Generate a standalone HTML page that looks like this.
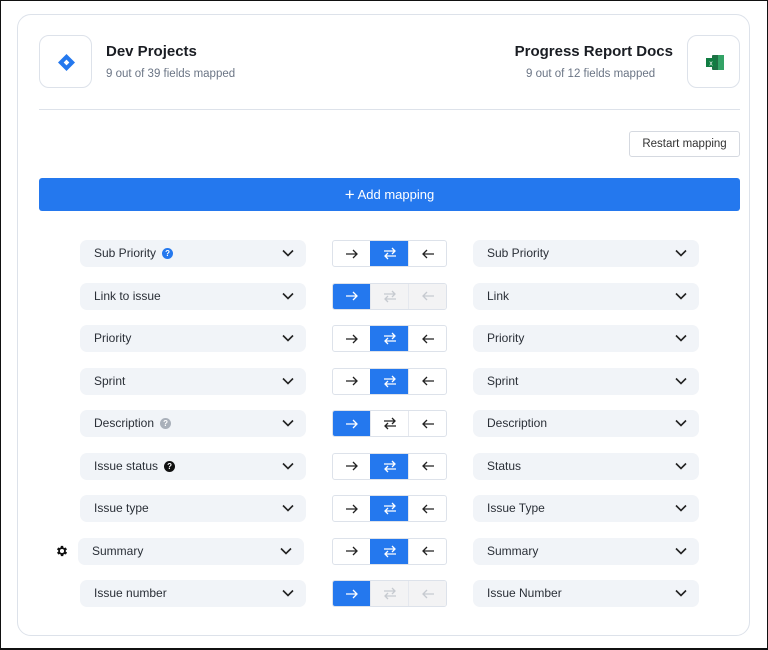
<!DOCTYPE html>
<html><head><meta charset="utf-8"><style>
*{box-sizing:border-box;margin:0;padding:0}
body{width:768px;height:650px;background:#fff;font-family:"Liberation Sans",sans-serif;position:relative;overflow:hidden}
.frame{position:absolute;left:0;top:0;width:768px;height:650px;border:1px solid #111;border-width:1px 1px 2px 1px;pointer-events:none}
.card{position:absolute;left:17px;top:14px;width:733px;height:622px;border:1px solid #dde2ea;border-radius:14px}
.ib{position:absolute;width:53px;height:53px;border:1px solid #dde2ea;border-radius:10px;background:#fff}
.t{position:absolute;font-size:15px;font-weight:bold;color:#1a1d23}
.s{position:absolute;font-size:11.5px;color:#6b7585}
.div{position:absolute;left:39px;top:109px;width:701px;height:1px;background:#dde2ea}
.rb{position:absolute;left:629px;top:131px;width:111px;height:26px;border:1px solid #d5d9e0;border-radius:3px;font-size:11.5px;color:#333;text-align:center;line-height:24px}
.add{position:absolute;left:39px;top:178px;width:701px;height:33px;background:#2478ee;border-radius:3px;color:#fff;font-size:13px;text-align:center;line-height:33px}
.sel{position:absolute;width:226px;height:27px;background:#f1f4f8;border-radius:7px;font-size:12px;color:#2a2f37;line-height:27px;padding-left:14px}
.sel svg.ch{position:absolute;right:12px;top:9px}
.tg{position:absolute;left:332px;width:115px;height:27px;border:1px solid #dde2ea;border-radius:3px;display:flex;overflow:hidden;background:#fff}
.tg div{flex:1;display:flex;align-items:center;justify-content:center;border-left:1px solid #e5e8ee}
.tg div:first-child{border-left:none}
.tg .on{background:#2478ee;border-color:#2478ee}
.tg .off{background:#f3f3f4}
.q{display:inline-block;width:11px;height:11px;border-radius:50%;color:#fff;font-size:8px;font-weight:bold;line-height:11px;text-align:center;vertical-align:1px;margin-left:6px}
</style></head><body>
<div class="card"></div>
<div class="ib" style="left:39px;top:35px"><svg width="53" height="53" viewBox="0 0 53 53"><path d="M26.5 18 L35 26.5 L26.5 35 L18 26.5Z" fill="#2478ee"/><rect x="24.5" y="24.5" width="4" height="4" fill="#fff" transform="rotate(45 26.5 26.5)"/></svg></div>
<div class="t" style="left:106px;top:43px">Dev Projects</div>
<div class="s" style="left:106px;top:68px">9 out of 39 fields mapped</div>
<div class="t" style="right:95px;top:43px">Progress Report Docs</div>
<div class="s" style="left:526px;top:68px">9 out of 12 fields mapped</div>
<div class="ib" style="left:687px;top:35px"><svg width="53" height="53" viewBox="0 0 53 53"><rect x="24" y="19" width="12" height="15" rx="1" fill="#1e7145"/><rect x="30" y="19" width="6" height="15" fill="#33a366"/><rect x="18" y="22" width="10" height="9" fill="#107c41"/><text x="23" y="29.5" font-size="7" fill="#fff" text-anchor="middle" font-family="Liberation Sans">x</text></svg></div>
<div class="div"></div>
<div class="rb">Restart mapping</div>
<div class="add"><span style="font-size:17px;vertical-align:-1px">+</span> Add mapping</div>
<div id="rows"></div>
<svg style="position:absolute;left:55px;top:544px" width="14" height="14" viewBox="0 0 24 24"><path fill="#111" d="M19.4 13a7.5 7.5 0 0 0 0-2l2.1-1.6-2-3.5-2.5 1a7.6 7.6 0 0 0-1.7-1L15 3.2h-4l-.4 2.7a7.6 7.6 0 0 0-1.7 1l-2.5-1-2 3.5L6.6 11a7.5 7.5 0 0 0 0 2l-2.1 1.6 2 3.5 2.5-1a7.6 7.6 0 0 0 1.7 1l.4 2.7h4l.4-2.7a7.6 7.6 0 0 0 1.7-1l2.5 1 2-3.5zM13 15.5a3.5 3.5 0 1 1 0-7 3.5 3.5 0 0 1 0 7z" transform="translate(-1 0)"/></svg>
<div class="frame"></div>
<script>
var R=[["Sub Priority","b","Sub Priority",1],["Link to issue","","Link",0],["Priority","","Priority",1],["Sprint","","Sprint",1],["Description","g","Description",2],["Issue status","k","Status",1],["Issue type","","Issue Type",1],["Summary","","Summary",1],["Issue number","","Issue Number",0]];
var ch='<svg class="ch" width="12" height="8" viewBox="0 0 12 8"><path d="M1 1.5l5 5 5-5" fill="none" stroke="#222" stroke-width="1.6"/></svg>';
function ar(c,d){return d>0?'<svg width="14" height="10" viewBox="0 0 14 10"><path d="M1 5h11M8 1l4 4-4 4" fill="none" stroke="'+c+'" stroke-width="1.3"/></svg>':'<svg width="14" height="10" viewBox="0 0 14 10"><path d="M13 5H2M6 1L2 5l4 4" fill="none" stroke="'+c+'" stroke-width="1.3"/></svg>'}
function bi(c){return '<svg width="14" height="13" viewBox="0 0 14 13"><path d="M1 4h11M9 1l3 3-3 3M13 9H2M5 6L2 9l3 3" fill="none" stroke="'+c+'" stroke-width="1.3"/></svg>'}
var h='';
R.forEach(function(r,i){var y=240+i*42.5;
var q=r[1]?'<span class="q" style="background:'+({b:'#2478ee',g:'#a9b0ba',k:'#111'})[r[1]]+'">?</span>':'';
var lx=r[0]=="Summary"?78:80;
h+='<div class="sel" style="left:'+lx+'px;top:'+y+'px">'+r[0]+q+ch+'</div>';
var t;
if(r[3]==1)t='<div>'+ar('#222',1)+'</div><div class="on">'+bi('#fff')+'</div><div>'+ar('#222',-1)+'</div>';
else if(r[3]==0)t='<div class="on">'+ar('#fff',1)+'</div><div class="off">'+bi('#c6cad0')+'</div><div class="off">'+ar('#c6cad0',-1)+'</div>';
else t='<div class="on">'+ar('#fff',1)+'</div><div>'+bi('#222')+'</div><div>'+ar('#222',-1)+'</div>';
h+='<div class="tg" style="top:'+y+'px">'+t+'</div>';
h+='<div class="sel" style="left:473px;top:'+y+'px">'+r[2]+ch+'</div>';});
document.getElementById('rows').innerHTML=h;
</script>
</body></html>
